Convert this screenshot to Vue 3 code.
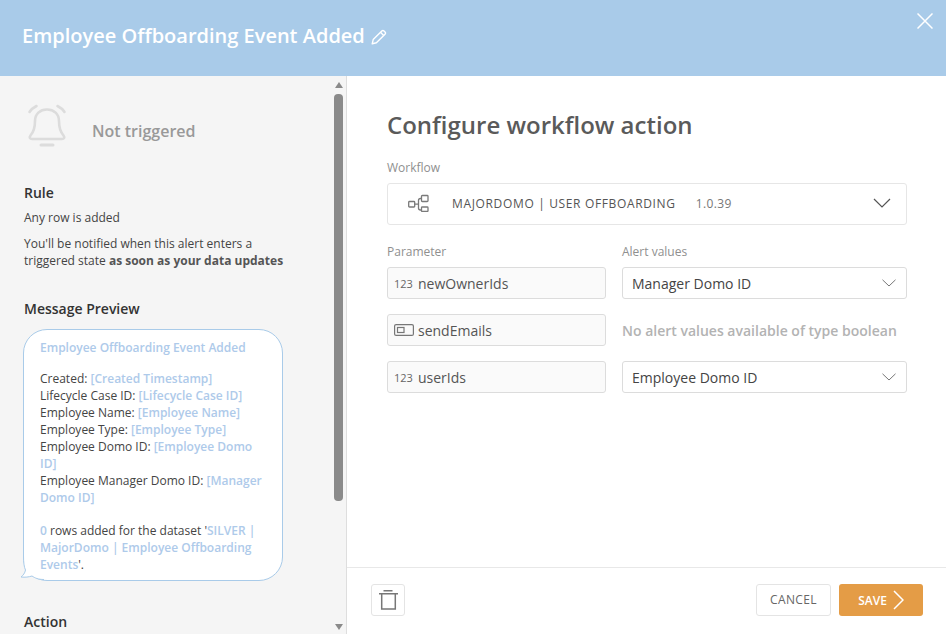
<script setup>
const lines = [
  { label: 'Created: ', value: '[Created Timestamp]' },
  { label: 'Lifecycle Case ID: ', value: '[Lifecycle Case ID]' },
  { label: 'Employee Name: ', value: '[Employee Name]' },
  { label: 'Employee Type: ', value: '[Employee Type]' },
  { label: 'Employee Domo ID: ', value: '[Employee Domo ID]' },
  { label: 'Employee Manager Domo ID: ', value: '[Manager Domo ID]' }
]
const params = [
  { type: 'num', name: 'newOwnerIds', value: 'Manager Domo ID' },
  { type: 'bool', name: 'sendEmails', value: null },
  { type: 'num', name: 'userIds', value: 'Employee Domo ID' }
]
</script>

<template>
  <div class="modal">
    <header class="head">
      <h1 class="title">Employee Offboarding Event Added</h1>
      <svg class="pencil" width="16" height="16" viewBox="0 0 16 16" fill="none" stroke="#fff" stroke-width="1.4" stroke-linejoin="round">
        <path d="M1.200 14.800l1-4.200L10.800 2a1.600 1.600 0 0 1 2.200 0l1 1a1.600 1.600 0 0 1 0 2.200l-8.600 8.600z" />
        <path d="M9.500 3.300l3.200 3.200" />
      </svg>
      <svg class="close" width="16" height="16" viewBox="0 0 16 16" stroke="#fff" stroke-width="1.500" fill="none">
        <path d="M0.500 0.500l15 15M15.500 0.500l-15 15" />
      </svg>
    </header>
    <div class="body">
      <aside class="side">
        <div class="side-scroll">
          <div class="status">
            <svg class="bell" width="40" height="44" viewBox="0 0 40 44" fill="none" stroke="#dcdcdc" stroke-width="2.600" stroke-linecap="round" stroke-linejoin="round">
              <path d="M3.500 31.500C6.500 28 8 24 8 17 8 10 13 5.500 20 5.500S32 10 32 17c0 7 1.500 11 4.500 14.500 1.500 2 .5 3.500-1.500 3.500H5c-2 0-3-1.500-1.500-3.500z" />
              <path d="M2.500 8C4 5.500 6.500 3.500 9.500 2M37.500 8C36 5.500 33.500 3.500 30.500 2" />
              <path d="M14 41h12" stroke-width="3" />
            </svg>
            <span class="status-text">Not triggered</span>
          </div>
          <h2 class="side-h rule-h">Rule</h2>
          <p class="small any">Any row is added</p>
          <p class="small notify">You'll be notified when this alert enters a triggered state <b>as soon as your data updates</b></p>
          <h2 class="side-h preview-h">Message Preview</h2>
          <div class="bubble-wrap">
            <div class="bubble">
              <div class="link strong">Employee Offboarding Event Added</div>
              <div class="gap first"></div>
              <div v-for="l in lines" :key="l.label">{{ l.label }}<span class="link">{{ l.value }}</span></div>
              <div class="gap"></div>
              <div><span class="link">0</span> rows added for the dataset '<span class="link">SILVER | MajorDomo | Employee Offboarding Events</span>'.</div>
            </div>
            <svg class="tail" width="48" height="30" viewBox="0 0 48 30">
              <path d="M3.500 4C3.500 10 4 15 5.500 18 5 21 3 23.500 1 25c4 .5 8 0 11-1 3 2 6 3.500 12 3.500L27 27 16 18 8 7z" fill="#fff" />
              <path d="M3.500 4C3.500 10 4 15 5.500 18 5 21 3 23.500 1 25c4 .5 8 0 11-1 3 2 6 3.500 12 3.500" fill="none" stroke="#a9cbe9" stroke-width="1" />
            </svg>
          </div>
          <h2 class="side-h action-h">Action</h2>
        </div>
        <div class="scrollbar">
          <span class="arrow up"></span>
          <span class="thumb"></span>
          <span class="arrow down"></span>
        </div>
      </aside>
      <main class="main">
        <div class="content">
          <h2 class="config">Configure workflow action</h2>
          <div class="label wf-label">Workflow</div>
          <div class="workflow">
            <svg class="wf-icon" width="22" height="18" viewBox="0 0 22 18" fill="none" stroke="#7a7a7a" stroke-width="1.300">
              <rect x=".7" y="7.500" width="6" height="5.500" rx=".8" />
              <rect x="13.500" y="1.500" width="6.500" height="6" rx=".8" />
              <rect x="13.500" y="13" width="6.500" height="4.500" rx=".8" />
              <path d="M6.700 10.200H10M13.500 4.500h-1a2 2 0 0 0-2 2v7.500a2 2 0 0 0 2 2h1" />
            </svg>
            <span class="wf-name">MAJORDOMO | USER OFFBOARDING</span>
            <span class="wf-ver">1.0.39</span>
            <svg class="wf-chev" width="18" height="10" viewBox="0 0 18 10" fill="none" stroke="#555" stroke-width="1.200"><path d="M1 1l8 8 8-8" /></svg>
          </div>
          <div class="cols heads">
            <div class="label">Parameter</div>
            <div class="label">Alert values</div>
          </div>
          <div class="cols rows">
            <template v-for="p in params" :key="p.name">
              <div class="param">
                <span v-if="p.type === 'num'" class="num">123</span>
                <svg v-else class="boolicon" width="20" height="12" viewBox="0 0 20 12" fill="none" stroke="#777" stroke-width="1.200">
                  <rect x=".6" y=".6" width="18.800" height="10.800" rx="1.500" />
                  <rect x="3.500" y="3.500" width="6.500" height="5" />
                </svg>
                <span>{{ p.name }}</span>
              </div>
              <div v-if="p.value" class="select">
                <span>{{ p.value }}</span>
                <svg width="14" height="8" viewBox="0 0 14 8" fill="none" stroke="#777" stroke-width="1"><path d="M.5.800L7 7l6.500-6.200" /></svg>
              </div>
              <div v-else class="none">No alert values available of type boolean</div>
            </template>
          </div>
        </div>
        <footer class="foot">
          <button class="trash" aria-label="Delete">
            <svg width="19" height="20" viewBox="0 0 19 20" fill="none" stroke="#777" stroke-width="1.500">
              <path d="M0 3.800h19M4.500 .8h9M2.700 3.800V19h13.600V3.800" />
            </svg>
          </button>
          <button class="cancel">CANCEL</button>
          <button class="save">SAVE
            <svg width="11" height="20" viewBox="0 0 11 20" fill="none" stroke="#fff" stroke-width="1.500"><path d="M1 1l9 9-9 9" /></svg>
          </button>
        </footer>
      </main>
    </div>
  </div>
</template>

<style>
html, body { margin: 0; padding: 0; overflow: hidden; }
</style>

<style scoped>
.modal { width: 946px; height: 634px; display: flex; flex-direction: column; font-family: "Open Sans", sans-serif; color: #333; background: #fff; overflow: hidden; }
.head { height: 76px; flex: none; background: #a9cbe9; display: flex; align-items: center; padding: 0 0 5px 22px; box-sizing: border-box; position: relative; }
.title { margin: 0; color: #fff; font-size: 20px; font-weight: 600; line-height: 28px; }
.pencil { margin-left: 6px; margin-top: 2px; }
.close { position: absolute; top: 13px; right: 13px; }
.body { flex: 1; display: flex; min-height: 0; }
.side { width: 347px; flex: none; box-sizing: border-box; display: flex; background: #f5f5f5; border-right: 1px solid #dedede; }
.side-scroll { flex: 1; overflow: hidden; padding: 0 24px; box-sizing: border-box; min-width: 0; }
.scrollbar { width: 15px; flex: none; display: flex; flex-direction: column; align-items: center; position: relative; background: #f5f5f5; }
.arrow { width: 0; height: 0; border-left: 4.500px solid transparent; border-right: 4.500px solid transparent; position: absolute; }
.arrow.up { top: 6px; border-bottom: 6px solid #8a8a8a; }
.arrow.down { bottom: 4px; border-top: 6px solid #8a8a8a; }
.thumb { position: absolute; top: 18px; width: 9px; height: 407px; background: #8a8a8a; border-radius: 4px; }
.status { display: flex; align-items: center; padding-top: 28px; height: 44px; }
.bell { margin-left: 3px; flex: none; }
.status-text { margin-left: 25px; margin-top: 10px; font-size: 16px; font-weight: 600; color: #999; line-height: 22px; }
.side-h { margin: 0; font-size: 14px; font-weight: 600; color: #333; line-height: 20px; }
.rule-h { margin-top: 35px; }
.small { margin: 0; font-size: 12px; line-height: 17px; color: #444; }
.small b { font-weight: 700; color: #555; }
.any { margin-top: 6px; }
.notify { margin-top: 9px; width: 262px; }
.preview-h { margin-top: 30px; }
.bubble-wrap { position: relative; width: 260px; margin-top: 10px; margin-left: -1px; }
.bubble { position: relative; width: 260px; height: 252px; box-sizing: border-box; background: #fff; border: 1px solid #a9cbe9; border-radius: 24px; padding: 9px 15px 0 16px; font-size: 12px; line-height: 17px; color: #444; }
.gap { height: 16px; }
.gap.first { height: 14px; }
.link { color: #aecaea; font-weight: 600; }
.tail { position: absolute; left: -3px; bottom: -1px; }
.action-h { margin-top: 31px; }
.main { flex: 1; min-width: 0; display: flex; flex-direction: column; }
.content { flex: 1; padding: 32px 39px 0 40px; min-height: 0; }
.config { margin: 0; font-size: 24px; font-weight: 600; line-height: 34px; color: #5a5a5a; }
.label { font-size: 12px; line-height: 16px; color: #8f8f8f; }
.wf-label { margin-top: 18px; }
.workflow { margin-top: 7px; height: 42px; box-sizing: border-box; border: 1px solid #e6e6e6; border-radius: 3px; display: flex; align-items: center; padding: 0 15px 2px 20px; background: #fff; }
.wf-icon { flex: none; }
.wf-name { margin-left: 22px; font-size: 12px; letter-spacing: .65px; color: #555; }
.wf-ver { margin-left: 20px; font-size: 12px; color: #777; letter-spacing: .4px; }
.wf-chev { margin-left: auto; }
.cols { display: grid; grid-template-columns: 219px 285px; column-gap: 16px; }
.heads { margin-top: 19px; }
.rows { margin-top: 7px; row-gap: 15px; grid-auto-rows: 32px; }
.param { box-sizing: border-box; height: 32px; background: #fafafa; border: 1px solid #dcdcdc; border-radius: 3px; display: flex; align-items: center; padding-left: 6px; font-size: 14px; color: #555; }
.num { font-size: 11px; color: #666; width: 24px; flex: none; }
.boolicon { width: 20px; margin-right: 4px; flex: none; }
.select { box-sizing: border-box; height: 32px; background: #fff; border: 1px solid #dcdcdc; border-radius: 3px; display: flex; align-items: center; justify-content: space-between; padding: 0 10px 0 9px; font-size: 14px; color: #444; }
.none { display: flex; align-items: center; font-size: 14px; font-weight: 600; color: #b3b3b3; white-space: nowrap; }
.foot { height: 67px; flex: none; box-sizing: border-box; border-top: 1px solid #e8e8e8; display: flex; align-items: flex-start; padding: 16px 23px 0 24px; }
.foot button { font-family: inherit; box-sizing: border-box; height: 32px; border-radius: 3px; cursor: pointer; padding: 0; }
.trash { width: 34px; background: #fff; border: 1px solid #e4e4e4; display: flex; align-items: center; justify-content: center; }
.foot .cancel { margin-left: auto; width: 75px; background: #fff; border: 1px solid #e4e4e4; font-size: 12px; letter-spacing: .4px; color: #666; padding-bottom: 2px; }
.save { margin-left: 8px; width: 84px; background: #e49c46; border: none; color: #fff; font-size: 12px; font-weight: 600; display: flex; align-items: center; justify-content: center; gap: 6px; }
</style>
